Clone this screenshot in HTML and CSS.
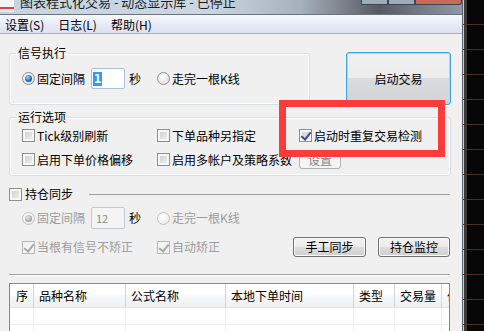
FILE: index.html
```html
<!DOCTYPE html>
<html lang="zh-CN">
<head>
  <meta charset="UTF-8">
  <title>图表程式化交易</title>
  <link rel="stylesheet" href="styles.css">
</head>
<body>
  <div class="screen">
    <div class="window">
      <div class="titlebar">
        <span class="app-icon"></span>
        <span class="title-text">图表程式化交易 - 动态显示库 - 已停止</span>
        <span class="caption-btns"><i class="cap"></i><i class="cap"></i><i class="cap cap-close"></i></span>
      </div>
      <div class="menubar">
        <span class="menu-item">设置(S)</span>
        <span class="menu-item">日志(L)</span>
        <span class="menu-item">帮助(H)</span>
      </div>

      <div class="content">
        <div class="top-row">
          <fieldset class="group group-signal">
            <legend>信号执行</legend>
            <div class="opt-line">
              <div class="cell-first">
                <label class="opt"><span class="radio checked"></span>固定间隔</label>
                <span class="textbox"><span class="sel">1</span></span>
                <span class="unit">秒</span>
              </div>
              <label class="opt"><span class="radio"></span>走完一根K线</label>
            </div>
          </fieldset>
          <button class="btn btn-default btn-start">启动交易</button>
        </div>

        <fieldset class="group group-run">
          <legend>运行选项</legend>
          <div class="opt-grid">
            <label class="opt"><span class="check"></span>Tick级别刷新</label>
            <label class="opt"><span class="check"></span>下单品种另指定</label>
            <label class="opt"><span class="check checked"></span>启动时重复交易检测</label>
            <label class="opt"><span class="check"></span>启用下单价格偏移</label>
            <label class="opt"><span class="check"></span>启用多帐户及策略系数</label>
            <div><button class="btn btn-set" disabled>设置</button></div>
          </div>
        </fieldset>

        <div class="sync-head">
          <label class="opt"><span class="check"></span>持仓同步</label>
          <span class="rule"></span>
        </div>
        <div class="sync-body">
          <div class="opt-line">
            <div class="cell-first">
              <label class="opt disabled"><span class="radio checked"></span>固定间隔</label>
              <span class="textbox disabled">12</span>
              <span class="unit">秒</span>
            </div>
            <label class="opt disabled"><span class="radio"></span>走完一根K线</label>
          </div>
          <div class="opt-line line-buttons">
            <div class="cell-first">
              <label class="opt disabled"><span class="check checked"></span>当根有信号不矫正</label>
            </div>
            <label class="opt disabled"><span class="check checked"></span>自动矫正</label>
            <button class="btn btn-sync">手工同步</button>
            <button class="btn btn-watch">持仓监控</button>
          </div>
        </div>

        <div class="separator"></div>

        <div class="list-wrap">
          <table class="list">
            <colgroup>
              <col style="width:24px"><col style="width:92px"><col style="width:100px">
              <col style="width:128px"><col style="width:41px"><col style="width:47px"><col style="width:60px">
            </colgroup>
            <thead>
              <tr>
                <th class="col-no">序</th>
                <th>品种名称</th>
                <th>公式名称</th>
                <th>本地下单时间</th>
                <th>类型</th>
                <th>交易量</th>
                <th>价格</th>
              </tr>
            </thead>
            <tbody>
              <tr><td></td><td></td><td></td><td></td><td></td><td></td><td></td></tr>
              <tr><td></td><td></td><td></td><td></td><td></td><td></td><td></td></tr>
            </tbody>
          </table>
        </div>
      </div>

      <!-- 标注框 -->
      <div class="highlight"></div>
    </div>
    <div class="desktop"></div>
  </div>
</body>
</html>
```

FILE: styles.css
```css
* {
  box-sizing: border-box;
}
body {
  margin: 0;
  background: #000;
  font-family: "Noto Sans CJK SC", "Noto Sans", sans-serif;
  font-size: 12px;
  line-height: 16px;
  color: #000;
}
.screen {
  display: flex;
  width: 484px;
  height: 331px;
  overflow: hidden;
}
.window {
  position: relative;
  flex: none;
  width: 463px;
  background: #f0f0f0;
  border-right: 1px solid #5d636c;
}
.desktop {
  flex: 1;
  background:
    repeating-linear-gradient(to bottom, transparent 0 24px, #4a2f22 24px 25px),
    linear-gradient(to right, #c9ccd0 0, #c9ccd0 1px, #3a3a3a 1px, #3a3a3a 4px, #070707 4px);
}

/* 标题栏 */
.titlebar {
  display: flex;
  height: 14px;
  overflow: hidden;
  background: linear-gradient(to right, #c6d4e2 0%, #cbd6e1 45%, #a7b1bb 65%, #555b63 82%, #8f9aa6 100%);
}
.app-icon {
  flex: none;
  width: 14px;
  height: 12px;
  background: linear-gradient(to bottom, #f4f4f4 0 7px, #d44 7px 9px, #e8e8e8 9px);
}
.title-text {
  margin: -6px 0 0 6px;
  line-height: 16px;
  font-size: 13px;
  color: #1c1c1c;
  white-space: nowrap;
  overflow: hidden;
  flex: 1;
}
.caption-btns {
  display: flex;
  flex: none;
  height: 5px;
  align-self: flex-start;
}
.cap {
  width: 27px;
  height: 5px;
  background: #9eabb9;
  border: 1px solid #3e4652;
  border-top: none;
}
.cap-close {
  width: 47px;
  background: #c96a55;
  border-radius: 0 0 3px 0;
}

/* 菜单 */
.menubar {
  display: flex;
  gap: 14px;
  height: 20px;
  padding: 3px 0 0 5px;
  line-height: 14px;
  background: linear-gradient(#f7f8fc, #e8ebf6 50%, #dde2f2);
  border-top: 1px solid #6d737c;
  border-bottom: 1px solid #aab0c4;
}

.content {
  padding: 12px 0 0 9px;
}

/* 分组框 */
.group {
  margin: 0;
  min-width: 0;
  border: 1px solid #d5dfe5;
  border-radius: 3px;
  box-shadow: inset 0 0 0 1px #fff;
}
.group legend {
  margin-left: -6px;
  padding: 0 2px;
  line-height: 14px;
}
.top-row {
  display: flex;
  align-items: flex-start;
  gap: 36px;
}
.group-signal {
  width: 301px;
  padding: 8px 12px 15px 12px;
}
.group-run {
  width: 442px;
  margin-top: 5px;
  padding: 2px 12px 6px 12px;
}

.opt-line {
  display: flex;
  align-items: center;
  height: 21px;
}
.cell-first {
  display: flex;
  align-items: center;
  flex: none;
  width: 135px;
}
.opt-grid {
  display: grid;
  grid-template-columns: 135px 142px 1fr;
  grid-auto-rows: 19px;
  row-gap: 5px;
  align-items: center;
}
.opt {
  display: flex;
  align-items: center;
  gap: 2px;
  white-space: nowrap;
}
.opt.disabled {
  color: #9c9c9c;
}

/* 单选 */
.radio {
  position: relative;
  flex: none;
  width: 13px;
  height: 13px;
  border: 1px solid #8e8f8f;
  border-radius: 50%;
  background: radial-gradient(circle at 40% 35%, #fff, #e4e4e4 65%, #cfcfcf);
}
.radio.checked::after {
  content: "";
  position: absolute;
  left: 2px;
  top: 2px;
  width: 7px;
  height: 7px;
  border-radius: 50%;
  background: radial-gradient(circle at 40% 35%, #9ad8f8, #2172bf 55%, #0c3b77);
}
.disabled .radio {
  border-color: #c2c2c2;
  background: radial-gradient(circle at 40% 35%, #fff, #eee 70%, #e2e2e2);
}
.disabled .radio.checked::after {
  background: radial-gradient(circle at 40% 35%, #e8e8e8, #a9a9a9 60%, #8c8c8c);
}

/* 复选 */
.check {
  position: relative;
  flex: none;
  width: 13px;
  height: 13px;
  border: 1px solid #8e8f8f;
  background: linear-gradient(135deg, #c9c9c9, #f6f6f6);
  box-shadow: inset 0 0 0 2px #f7f7f7;
}
.check.checked::after {
  content: "";
  position: absolute;
  left: 3px;
  top: 0;
  width: 4px;
  height: 8px;
  border: solid #3b4d8c;
  border-width: 0 2px 2px 0;
  transform: rotate(38deg);
}
.disabled .check {
  border-color: #b8b8b8;
  background: #f4f4f4;
  box-shadow: none;
}
.disabled .check.checked::after {
  border-color: #a8a8a8;
}

/* 输入框 */
.textbox {
  display: flex;
  align-items: center;
  flex: none;
  width: 34px;
  height: 21px;
  margin-left: 6px;
  padding-left: 1px;
  background: #fff;
  border: 1px solid #a9c2da;
  border-radius: 2px;
}
.sel {
  padding: 0 1px;
  background: #3399ff;
  color: #fff;
  font-family: "DejaVu Sans Mono", monospace;
  font-weight: bold;
  font-size: 12px;
  line-height: 14px;
}
.textbox.disabled {
  height: 22px;
  padding-left: 4px;
  background: #f4f4f4;
  border-color: #c3c8cd;
  color: #8a8a8a;
  font-size: 11px;
}
.unit {
  margin-left: 4px;
}

/* 按钮 */
.btn {
  padding: 0;
  font: inherit;
  color: #000;
  border: 1px solid #707070;
  border-radius: 3px;
  background: linear-gradient(#f2f2f2 0%, #ebebeb 50%, #dddddd 50%, #cfcfcf 100%);
  box-shadow: inset 0 0 0 1px #fbfbfb;
}
.btn-default {
  border-color: #3da3e5;
  background: linear-gradient(#f1f1f1 0%, #ececec 50%, #d9dbdc 50%, #d1d3d4 100%);
  box-shadow: inset 0 0 0 1px #a6dcf7;
}
.btn-start {
  width: 105px;
  height: 53px;
  margin-top: 6px;
}
.btn-set {
  width: 42px;
  height: 19px;
  color: #838383;
  border-color: #adb2b5;
  background: #f4f4f4;
  box-shadow: none;
}

/* 持仓同步 */
.sync-head {
  display: flex;
  align-items: center;
  height: 14px;
  margin-top: 11px;
}
.sync-head .opt {
  gap: 3px;
}
.rule {
  flex: 1;
  height: 1px;
  margin: 0 12px 0 16px;
  background: #a0a0a0;
}
.sync-body {
  padding-left: 13px;
}
.sync-body .opt-line:first-child {
  height: 22px;
  margin-top: 6px;
}
.line-buttons {
  height: 20px;
  margin-top: 8px;
}
.line-buttons > .opt {
  flex: 1;
}
.btn-sync {
  width: 73px;
  height: 20px;
}
.btn-watch {
  width: 72px;
  height: 20px;
  margin: 0 12px 0 12px;
}

.separator {
  height: 2px;
  margin: 17px 12px 0 0;
  border-top: 1px solid #a0a0a0;
  border-bottom: 1px solid #fff;
}

/* 列表 */
.list-wrap {
  width: 441px;
  height: 60px;
  margin-top: 7px;
  overflow: hidden;
  background: #fff;
  border: 1px solid #828790;
}
.list {
  width: 492px;
  table-layout: fixed;
  border-collapse: separate;
  border-spacing: 0;
}
.list th {
  height: 24px;
  padding: 0 0 0 5px;
  text-align: left;
  font-weight: normal;
  white-space: nowrap;
  overflow: hidden;
  background: linear-gradient(#fff 0%, #fff 45%, #f6f7f8 55%, #eff0f2 100%);
  border-right: 1px solid #d5d5d5;
  border-bottom: 1px solid #e3e4e6;
}
.list th.col-no {
  padding-left: 6px;
}
.list td {
  height: 17px;
  border-right: 1px solid #f0f0f0;
  border-bottom: 1px solid #f0f0f0;
}

.highlight {
  position: absolute;
  left: 279px;
  top: 100px;
  width: 166px;
  height: 57px;
  border: 7px solid #fc3b3b;
  pointer-events: none;
}
```
